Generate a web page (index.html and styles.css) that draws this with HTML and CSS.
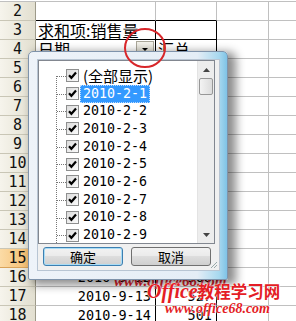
FILE: index.html
```html
<!DOCTYPE html>
<html>
<head>
<meta charset="utf-8">
<link rel="stylesheet" href="styles.css">
</head>
<body>
<div class="page">
  <div class="sheet">
    <div class="rh">2</div><div class="c pv-top"></div><div class="c pv-top"></div><div class="c"></div><div class="c"></div>
    <div class="rh">3</div><div class="c pv pv-b">求和项:销售量</div><div class="c pv pv-b"></div><div class="c"></div><div class="c"></div>
    <div class="rh">4</div><div class="c pv pv-b drop">日期<span class="ddbtn"></span></div><div class="c pv pv-b">汇总</div><div class="c"></div><div class="c"></div>
    <div class="rh">5</div><div class="c pv"></div><div class="c pv"></div><div class="c"></div><div class="c"></div>
    <div class="rh">6</div><div class="c pv"></div><div class="c pv"></div><div class="c"></div><div class="c"></div>
    <div class="rh">7</div><div class="c pv"></div><div class="c pv"></div><div class="c"></div><div class="c"></div>
    <div class="rh">8</div><div class="c pv"></div><div class="c pv"></div><div class="c"></div><div class="c"></div>
    <div class="rh">9</div><div class="c pv"></div><div class="c pv"></div><div class="c"></div><div class="c"></div>
    <div class="rh">10</div><div class="c pv"></div><div class="c pv"></div><div class="c"></div><div class="c"></div>
    <div class="rh">11</div><div class="c pv"></div><div class="c pv"></div><div class="c"></div><div class="c"></div>
    <div class="rh">12</div><div class="c pv"></div><div class="c pv"></div><div class="c"></div><div class="c"></div>
    <div class="rh">13</div><div class="c pv"></div><div class="c pv"></div><div class="c"></div><div class="c"></div>
    <div class="rh">14</div><div class="c pv"></div><div class="c pv"></div><div class="c"></div><div class="c"></div>
    <div class="rh active">15</div><div class="c pv"></div><div class="c pv"></div><div class="c"></div><div class="c"></div>
    <div class="rh">16</div><div class="c pv num">2010-9-12</div><div class="c pv num">568</div><div class="c"></div><div class="c"></div>
    <div class="rh">17</div><div class="c pv num">2010-9-13</div><div class="c pv num">527</div><div class="c"></div><div class="c"></div>
    <div class="rh">18</div><div class="c pv num">2010-9-14</div><div class="c pv num">501</div><div class="c"></div><div class="c"></div>
  </div>

  <div class="wm-back">www.office68.com</div>

  <div class="dialog">
    <div class="client">
      <div class="listbox">
        <ul class="tree">
          <li class="item"><span class="cb"><svg viewBox="0 0 11 11"><path d="M2 5.2 L4.4 7.8 L9 2.6" /></svg></span><span class="label cjk">(全部显示)</span></li>
          <li class="item sel"><span class="cb"><svg viewBox="0 0 11 11"><path d="M2 5.2 L4.4 7.8 L9 2.6" /></svg></span><span class="label">2010-2-1</span></li>
          <li class="item"><span class="cb"><svg viewBox="0 0 11 11"><path d="M2 5.2 L4.4 7.8 L9 2.6" /></svg></span><span class="label">2010-2-2</span></li>
          <li class="item"><span class="cb"><svg viewBox="0 0 11 11"><path d="M2 5.2 L4.4 7.8 L9 2.6" /></svg></span><span class="label">2010-2-3</span></li>
          <li class="item"><span class="cb"><svg viewBox="0 0 11 11"><path d="M2 5.2 L4.4 7.8 L9 2.6" /></svg></span><span class="label">2010-2-4</span></li>
          <li class="item"><span class="cb"><svg viewBox="0 0 11 11"><path d="M2 5.2 L4.4 7.8 L9 2.6" /></svg></span><span class="label">2010-2-5</span></li>
          <li class="item"><span class="cb"><svg viewBox="0 0 11 11"><path d="M2 5.2 L4.4 7.8 L9 2.6" /></svg></span><span class="label">2010-2-6</span></li>
          <li class="item"><span class="cb"><svg viewBox="0 0 11 11"><path d="M2 5.2 L4.4 7.8 L9 2.6" /></svg></span><span class="label">2010-2-7</span></li>
          <li class="item"><span class="cb"><svg viewBox="0 0 11 11"><path d="M2 5.2 L4.4 7.8 L9 2.6" /></svg></span><span class="label">2010-2-8</span></li>
          <li class="item"><span class="cb"><svg viewBox="0 0 11 11"><path d="M2 5.2 L4.4 7.8 L9 2.6" /></svg></span><span class="label">2010-2-9</span></li>
        </ul>
        <div class="scrollbar">
          <div class="sb-arrow"><svg viewBox="0 0 7 4"><path d="M0 4 L3.5 0 L7 4 Z"/></svg></div>
          <div class="thumb"></div>
          <div class="track"></div>
          <div class="sb-arrow"><svg viewBox="0 0 7 4"><path d="M0 0 L7 0 L3.5 4 Z"/></svg></div>
        </div>
      </div>
      <div class="buttons">
        <button class="btn default">确定</button>
        <button class="btn">取消</button>
      </div>
      <svg class="grip" viewBox="0 0 8 8"><path d="M7 1 L1 7 M7 4 L4 7" /></svg>
    </div>
  </div>

  <svg class="circle" viewBox="0 0 44 42"><ellipse cx="22" cy="21" rx="20" ry="19" /></svg>

  <div class="wm">
    <div class="wm-1">Office<span class="wm-cjk">教程学习网</span></div>
    <div class="wm-2">www.office68.com</div>
  </div>
</div>
</body>
</html>
```

FILE: styles.css
```css
* { box-sizing: border-box; }
html, body { margin: 0; padding: 0; background: #fff; }
.page {
  position: relative;
  width: 296px;
  height: 321px;
  overflow: hidden;
  font-family: "Noto Sans CJK SC", sans-serif;
  color: #000;
}
.sheet {
  display: grid;
  grid-template-columns: 36px 120px 61px 52px 40px;
  grid-auto-rows: 19px;
  margin-top: 1px;
  border-top: 1px solid #c0c0c0;
}
.rh {
  background: linear-gradient(to right, #f6f4ec, #e2dfd0);
  border-right: 1px solid #9d9a8a;
  border-bottom: 1px solid #c9c6b6;
  font-family: "DejaVu Sans Mono", monospace;
  font-size: 15px;
  line-height: 18px;
  text-align: center;
  color: #111;
}
.rh.active {
  background: linear-gradient(to right, #fbdba6, #f2b765);
  border-bottom-color: #d9a35a;
}
.c {
  position: relative;
  border-right: 1px solid #c0c0c0;
  border-bottom: 1px solid #c0c0c0;
  font-size: 16px;
  line-height: 18px;
  padding-left: 2px;
  white-space: nowrap;
}
.c.pv { border-right-color: #000; }
.c.pv-top { border-bottom-color: #000; }
.c.pv-b { border-bottom-color: #000; }
.c.num {
  font-family: "DejaVu Sans Mono", monospace;
  font-size: 13.5px;
  text-align: right;
  padding-right: 4px;
}
.ddbtn {
  position: absolute;
  right: 1px;
  top: 1px;
  width: 18px;
  height: 16px;
  background: linear-gradient(#f3f2ec, #d9d6c8);
  border: 1px solid #a9a699;
}
.ddbtn::after {
  content: "";
  position: absolute;
  left: 5px;
  top: 6px;
  border-left: 3px solid transparent;
  border-right: 3px solid transparent;
  border-top: 3px solid #000;
}

/* watermarks */
.wm-back {
  position: absolute;
  left: 114px;
  top: 272px;
  white-space: nowrap;
  font-family: "Liberation Serif", serif;
  font-style: italic;
  font-weight: bold;
  font-size: 15px;
  line-height: 18px;
  color: #e0202a;
}
.wm {
  position: absolute;
  left: 147px;
  top: 281px;
  white-space: nowrap;
  color: #e41d25;
  font-style: italic;
  font-weight: bold;
  text-shadow: 0 0 2px #fff, 0 0 1px #fff;
}
.wm-1 {
  font-family: "Liberation Serif", serif;
  font-size: 20px;
  line-height: 21px;
}
.wm-cjk {
  font-family: "Noto Sans CJK SC", sans-serif;
  font-size: 16.5px;
  font-style: normal;
}
.wm-2 {
  font-family: "Liberation Serif", serif;
  font-size: 14px;
  line-height: 13px;
  margin-left: 18px;
}

/* dialog */
.dialog {
  position: absolute;
  left: 28px;
  top: 51px;
  width: 200px;
  height: 229px;
  padding: 7px 7px 8px 8px;
  border: 1px solid #7f93ab;
  border-radius: 5px 5px 2px 2px;
  background: linear-gradient(to right, #eef3f9 0%, #e4edf6 85%, #a7d8ef 96%, #7fc3e6 100%);
  box-shadow: 6px 3px 10px 2px rgba(0,0,0,0.45);
}
.client {
  position: relative;
  height: 100%;
  background: #f0f0f0;
  border: 1px solid #b8c5d3;
  display: flex;
  flex-direction: column;
}
.listbox {
  display: flex;
  height: 184px;
  margin-right: 4px;
  background: #fff;
  border: 1px solid #828790;
}
.tree {
  position: relative;
  flex: 1;
  list-style: none;
  margin: 0;
  padding: 6px 0 0 0;
  overflow: hidden;
}
.tree::before {
  content: "";
  position: absolute;
  left: 17px;
  top: 15px;
  bottom: 0;
  border-left: 1px dotted #777;
}
.item {
  position: relative;
  display: flex;
  align-items: center;
  height: 17.7px;
  padding-left: 27px;
  font-family: "DejaVu Sans Mono", "Noto Sans CJK SC", monospace;
  font-size: 13.3px;
}
.item::before {
  content: "";
  position: absolute;
  left: 18px;
  top: 9px;
  width: 9px;
  border-top: 1px dotted #777;
}
.cb {
  width: 13px;
  height: 13px;
  border: 1px solid #8e8f8f;
  background: linear-gradient(135deg, #dcdcdc, #fbfbfb);
  display: flex;
  align-items: center;
  justify-content: center;
  flex: none;
}
.cb svg {
  width: 11px;
  height: 11px;
  fill: none;
  stroke: #000;
  stroke-width: 2.2;
}
.label {
  margin-left: 1px;
  padding: 0 2px;
  line-height: 16px;
  border: 1px solid transparent;
}
.label.cjk {
  font-size: 15px;
  font-family: "Noto Sans CJK SC", sans-serif;
  line-height: 16px;
}
.sel .label {
  background: #3399ff;
  color: #fff;
  border: 1px dotted #bcdcff;
}
.scrollbar {
  width: 17px;
  display: flex;
  flex-direction: column;
  background: #ededed;
  border-left: 1px solid #e3e3e3;
}
.sb-arrow {
  height: 17px;
  display: flex;
  align-items: center;
  justify-content: center;
}
.sb-arrow svg { width: 7px; height: 4px; fill: #444; }
.thumb {
  height: 17px;
  margin: 0 1px;
  border: 1px solid #979797;
  border-radius: 2px;
  background: linear-gradient(to right, #f3f3f3, #dcdcdc);
}
.track { flex: 1; }
.buttons {
  display: flex;
  gap: 8px;
  padding: 3px 0 0 5px;
}
.btn {
  width: 80px;
  height: 19px;
  padding: 0;
  font-family: "Noto Sans CJK SC", sans-serif;
  font-size: 13px;
  line-height: 16px;
  color: #000;
  border: 1px solid #707070;
  border-radius: 3px;
  background: linear-gradient(#f2f2f2 0%, #ebebeb 45%, #dddddd 50%, #cfcfcf 100%);
}
.btn.default {
  border-color: #3c7fb1;
  box-shadow: inset 0 0 0 1px #a9dcf5;
}
.grip {
  position: absolute;
  right: 1px;
  bottom: 1px;
  width: 8px;
  height: 8px;
  fill: none;
  stroke: #9aa;
  stroke-width: 1;
}
.circle {
  position: absolute;
  left: 123px;
  top: 27px;
  width: 44px;
  height: 42px;
  fill: none;
  stroke: #d8262a;
  stroke-width: 2;
}
```
